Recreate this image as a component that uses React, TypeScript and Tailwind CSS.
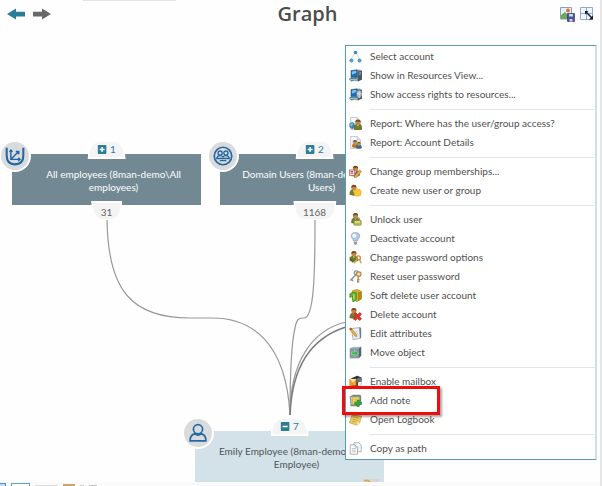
import { type ReactNode } from "react";

const Person = ({ x = 0, y = 0, coat = "#6f7d24" }: { x?: number; y?: number; coat?: string }) => (
  <g transform={`translate(${x} ${y})`}>
    <path d="M0 12 Q0 6.500 3 6 H7 Q10 6.500 10 12 Q5 14 0 12Z" fill={coat} stroke="#4b4a1c" strokeWidth="0.500" />
    <path d="M4 6 L5 9 L6 6Z" fill="#f3efdc" />
    <circle cx="5" cy="3.500" r="3.200" fill="#c08a4e" />
    <path d="M2 3.500 Q1.500 0 5 0 Q8.500 0 8 3.500 Q6 1.500 2 3.500Z" fill="#7a4a1e" />
  </g>
);

const Server = () => (
  <>
    <path d="M7 1.500 L13 0.500 L16 2 V13 L10 15.500 L7 14Z" fill="#8d9ba8" />
    <path d="M11 3 L16 2 V13 L11 15.500Z" fill="#4b5763" />
    <path d="M12 5 L15 4 M12 7 L15 6" stroke="#b8c4ce" strokeWidth="0.800" />
    <path d="M2.500 2 L10 1 V10 L2.500 10.500Z" fill="#1f6db5" stroke="#17405f" strokeWidth="0.700" />
    <path d="M3.500 3 L9 2.300 V5 L3.500 7Z" fill="#7fc0ee" />
    <path d="M1 11 L9 10.500 L11 13 L3 15.500 L0 13Z" fill="#3b8cc9" />
    <path d="M1 13 H10" stroke="#f1cf55" strokeWidth="1" />
  </>
);

const Page = () => (
  <>
    <path d="M2 0.500 H10 L14 4.500 V15.500 H2Z" fill="#f5f7f9" stroke="#a9b1b8" strokeWidth="0.800" />
    <path d="M10 0.500 V4.500 H14" fill="none" stroke="#a9b1b8" strokeWidth="0.800" />
  </>
);

const icons: Record<string, ReactNode> = {
  select: (
    <>
      <path d="M7 4 L3 11 M9 4 L13 11" stroke="#b4c3cd" strokeWidth="1" strokeDasharray="2 1" />
      <circle cx="8" cy="3" r="2.200" fill="#3a8cc4" />
      <circle cx="3" cy="13" r="2.400" fill="#4f9bd0" />
      <circle cx="13" cy="13" r="2.400" fill="#4f9bd0" />
    </>
  ),
  resources: <Server />,
  rights: (
    <>
      <Server />
      <path d="M9 4 L12.500 2.500 L16 4 V9 Q15 12 12.500 13 Q10 12 9 9Z" fill="#9fb3c3" stroke="#58687a" strokeWidth="0.800" />
      <path d="M12.500 4 V12 M10 7 H15" stroke="#e5edf2" strokeWidth="1" />
    </>
  ),
  access: (
    <>
      <Page />
      <path d="M0.500 8 L4 6 L7 8 V12 L4 15 L0.500 12Z" fill="#3c83b6" />
      <path d="M1.500 9 L4 7.500 L5 9 L3 12Z" fill="#8cc2e4" />
      <Person x={6} y={3} />
    </>
  ),
  details: (
    <>
      <Page />
      <rect x="4" y="5" width="7" height="5" fill="#c8d9e5" />
      <g transform="translate(4 5) scale(0.700)">
        <Person coat="#ba741d" />
      </g>
      <g transform="translate(9 7) scale(0.650)">
        <Person coat="#2865ad" />
      </g>
    </>
  ),
  membership: (
    <>
      <Person x={3} y={1} coat="#3d78b6" />
      <path d="M0.500 6 H7 V13 H0.500Z" fill="#f4e5e1" stroke="#b23b2e" strokeWidth="0.800" />
      <path d="M2 8 H5 M2 10 H5" stroke="#c5372c" strokeWidth="1.200" />
      <path d="M7 13 L13 6 L15.500 8 L9.500 15 L6.500 15.500Z" fill="#f0a832" stroke="#a25a18" strokeWidth="0.600" />
    </>
  ),
  create: (
    <>
      <Person x={1} y={1} />
      <circle cx="10.500" cy="10.500" r="4.800" fill="#efb01f" />
      <path d="M10.500 4.500 L12 8 L16 8.500 L13.500 11 L14.500 15 L10.500 13.500 L7 15 L8 11 L5.500 8.500 L9 8Z" fill="#f8c940" />
    </>
  ),
  unlock: (
    <>
      <Person x={3} y={0} />
      <path d="M8 9 V7 Q10.500 4 13 7 V9" fill="none" stroke="#9a9c8c" strokeWidth="1.300" />
      <rect x="6" y="9" width="9" height="6" rx="1" fill="#b8bf52" stroke="#73772b" strokeWidth="0.700" />
      <path d="M7.500 11 H13.500" stroke="#edf0a8" strokeWidth="1.300" />
    </>
  ),
  bulb: (
    <>
      <path d="M5.500 11 Q5 9 3.500 7.500 Q0.500 1 8 0.500 Q15.500 1 12.500 7.500 Q11 9 10.500 11Z" fill="#b6c8dc" stroke="#8195ae" strokeWidth="0.700" />
      <circle cx="6.500" cy="4.500" r="2.500" fill="#eff6fc" />
      <path d="M6 12 H10 V14.500 L8 16 L6 14.500Z" fill="#7e858d" />
      <path d="M6 13.500 H10" stroke="#d2d5d8" strokeWidth="0.700" />
    </>
  ),
  options: (
    <>
      <Person x={1} y={0} />
      <circle cx="11.500" cy="8.500" r="2.500" fill="none" stroke="#c9872f" strokeWidth="1.500" />
      <path d="M10 10.500 L6 15 M13 10.500 L15 15" stroke="#d4a142" strokeWidth="1.800" />
      <path d="M1 8 L5 14" stroke="#3d6b2e" strokeWidth="1.500" />
    </>
  ),
  keys: (
    <>
      <path d="M9.500 5 L1.500 13 M3 11.500 L5 13.500" stroke="#8d969e" strokeWidth="1.900" />
      <circle cx="9" cy="3.500" r="2.500" fill="#e2e7eb" stroke="#8d969e" strokeWidth="1.500" />
      <circle cx="12" cy="5" r="2.800" fill="#f3dfad" stroke="#b7893c" strokeWidth="1.500" />
      <path d="M11.500 8 L10.500 15.500 M11 12 H13 M10.500 14.500 H12.500" stroke="#b7893c" strokeWidth="1.700" />
    </>
  ),
  softDelete: (
    <>
      <path d="M4 2 L10 0.500 L15.500 3 V12 L10 15.500 L4 13Z" fill="#d9af2a" stroke="#8b6b15" strokeWidth="0.600" />
      <path d="M11 4 L15.500 3 V12 L11 15.500Z" fill="#b08a1b" />
      <path d="M1 6 Q4 3 9 4.500 V13 Q7 16 4.500 15.500 V9 L1 10.500Z" fill="#62b32e" stroke="#2d7a1c" strokeWidth="0.700" />
      <path d="M6 6.500 V13" stroke="#c5ee98" strokeWidth="1.300" />
    </>
  ),
  remove: (
    <>
      <Person x={1} y={0} />
      <path d="M5.500 7 L8 5.500 L10.500 8 L13.500 5.500 L15.500 7.500 L13 10.500 L15.500 13.500 L13 15.500 L10.500 13 L7.500 15.500 L5.500 13.500 L8 10.500Z" fill="#e53328" stroke="#9f1c15" strokeWidth="0.600" />
    </>
  ),
  edit: (
    <>
      <path d="M3 2 L14 0.500 V14 L5 15.500Z" fill="#e9eef3" stroke="#8393a5" strokeWidth="0.800" />
      <path d="M12.500 1 L15 1.500 V13 L13.500 14Z" fill="#6b7d96" />
      <path d="M7 6 L11 5.500 M7 8.500 H11 M7 11 H11" stroke="#b7c4d0" strokeWidth="0.800" />
      <path d="M0.500 2 L2.500 1 L9 9 L9.300 12 L7 10.800Z" fill="#eeb13e" stroke="#a86d1b" strokeWidth="0.600" />
      <path d="M0.500 2 L2.500 1 L4 3 L2 4.200Z" fill="#c84433" />
    </>
  ),
  move: (
    <>
      <path d="M1 3 L5 1 H15 V12 L12 15 H1Z" fill="#a9b8c4" />
      <path d="M1 3 H12 V15 H1Z" fill="#8497a8" />
      <path d="M12 3 L15 1 V12 L12 15Z" fill="#556473" />
      <path d="M3 7.500 H7 V5 L12 9 L7 13 V10.500 H3Z" fill="#41b649" stroke="#d8f1d5" strokeWidth="0.500" />
    </>
  ),
  mailbox: (
    <>
      <path d="M3 4 L10 1 L15.500 3 V12 L9 15 L3 13Z" fill="#2d3135" />
      <path d="M10 4 L15 3 V8 L10 9Z" fill="#70777c" />
      <path d="M1 5 H9 V13 H1Z" fill="#f2a02b" stroke="#b45e13" strokeWidth="0.600" />
      <path d="M1 5 L5 9.500 L9 5Z" fill="#fde2a5" />
      <path d="M11 9 L15.500 8 V12 L11 14Z" fill="#eef1f2" />
    </>
  ),
  addNote: (
    <>
      <path d="M1 3 L5 1 H14 L15 3 V12 L12 15 H2Z" fill="#77838c" />
      <path d="M2 3.500 H13 V13 H3Z" fill="#c3ccd2" />
      <path d="M4 4 L12 3.500 L12.500 9.500 L9 13 H4.500Z" fill="#f0d75d" stroke="#a68e27" strokeWidth="0.500" />
      <path d="M6 6.500 H10 M6 9 H8" stroke="#c1a431" strokeWidth="0.800" />
      <path d="M10 7.500 H12.500 V10 H15.500 V12.800 H12.500 V15.500 H10 V12.800 H7 V10 H10Z" fill="#2fae34" stroke="#12711d" strokeWidth="0.600" />
    </>
  ),
  logbook: (
    <>
      <path d="M4 2 L15.500 4 L13 12 L10 15 L0.500 12Z" fill="#e9cc62" stroke="#a78a2b" strokeWidth="0.700" />
      <path d="M10 15 L10.500 11.500 L13 12Z" fill="#fff1b0" />
      <path d="M5.500 5 L12 6.300 M4.500 7.500 L11 9 M4 10 L8 11" stroke="#a98d36" strokeWidth="0.800" />
      <circle cx="8" cy="2" r="1.500" fill="#9b9b84" />
    </>
  ),
  copy: (
    <>
      <path d="M6 0.800 H12 L15 4 V12 H6Z" fill="#f2f4f5" stroke="#9ba3aa" strokeWidth="0.900" />
      <path d="M1.500 3.500 H7.500 L10.500 6.500 V15 H1.500Z" fill="#fafbfb" stroke="#8f989f" strokeWidth="0.900" />
      <path d="M7.500 3.500 V6.500 H10.500 M3.500 8 H8.500 M3.500 10 H8.500 M3.500 12 H8.500" fill="none" stroke="#a7afb5" strokeWidth="0.800" />
    </>
  ),
};

type MenuEntry = { label: string; icon: string; marked?: boolean };

const menuGroups: MenuEntry[][] = [
  [
    { label: "Select account", icon: "select" },
    { label: "Show in Resources View...", icon: "resources" },
    { label: "Show access rights to resources...", icon: "rights" },
  ],
  [
    { label: "Report: Where has the user/group access?", icon: "access" },
    { label: "Report: Account Details", icon: "details" },
  ],
  [
    { label: "Change group memberships...", icon: "membership" },
    { label: "Create new user or group", icon: "create" },
  ],
  [
    { label: "Unlock user", icon: "unlock" },
    { label: "Deactivate account", icon: "bulb" },
    { label: "Change password options", icon: "options" },
    { label: "Reset user password", icon: "keys" },
    { label: "Soft delete user account", icon: "softDelete" },
    { label: "Delete account", icon: "remove" },
    { label: "Edit attributes", icon: "edit" },
    { label: "Move object", icon: "move" },
  ],
  [
    { label: "Enable mailbox", icon: "mailbox" },
    { label: "Add note", icon: "addNote", marked: true },
    { label: "Open Logbook", icon: "logbook" },
  ],
  [{ label: "Copy as path", icon: "copy" }],
];

function ContextMenu() {
  return (
    <div
      role="menu"
      className="absolute left-[345px] top-[9px] w-[252px] border border-r-2 border-[#5b9ab0] border-r-[#cfdfe7] bg-white pb-px pt-px"
    >
      {menuGroups.map((group, i) => (
        <div key={i} role="group">
          {i > 0 && (
            <div className="flex h-[10px] items-center pl-6">
              <div className="h-px w-full bg-[#e2e4e6]" />
            </div>
          )}
          {group.map((item) => (
            <button
              key={item.label}
              type="button"
              role="menuitem"
              className="relative flex h-[19px] w-full items-center gap-2 pl-[3px] text-left text-[10px] leading-[19px] whitespace-nowrap text-[#505050]"
            >
              <svg viewBox="0 0 16 16" className="size-[13px] shrink-0" aria-hidden="true">
                {icons[item.icon]}
              </svg>
              {item.label}
              {item.marked && (
                <span className="absolute -inset-y-[5px] -left-1 z-10 w-[98px] border-3 border-[#f20d0d] shadow-[2px_2px_2px_rgba(0,0,0,0.350)]" />
              )}
            </button>
          ))}
        </div>
      ))}
    </div>
  );
}

function Toggle({ open, count }: { open?: boolean; count: number }) {
  return (
    <button
      type="button"
      className="absolute -top-3 left-1/2 flex h-[17px] -translate-x-1/2 items-center gap-1 rounded-t-xl border-2 border-t-0 border-white bg-[#f4f4f4] px-2 text-[10px] leading-[15px] text-[#2c7d96]"
    >
      <svg viewBox="0 0 9 9" className="size-[9px]" aria-hidden="true">
        <rect width="9" height="9" rx="1" fill="#2c7d96" />
        <path d={open ? "M2 4.500H7" : "M2 4.500H7M4.500 2V7"} stroke="#fff" strokeWidth="1.400" />
      </svg>
      {count}
    </button>
  );
}

function Badge({ children }: { children: ReactNode }) {
  return (
    <div className="absolute -left-[11px] -top-3 flex size-7 items-center justify-center rounded-full bg-[#dadbdc] shadow-[0_0_0_2px_#fff]">
      <svg viewBox="0 0 24 24" className="size-5" fill="none" stroke="#2467a5" strokeWidth="2" aria-hidden="true">
        {children}
      </svg>
    </div>
  );
}

function GraphNode({
  position,
  lines,
  badge,
  parents,
  members,
}: {
  position: string;
  lines: string[];
  badge: ReactNode;
  parents: number;
  members?: number;
}) {
  const isGroup = members !== undefined;
  return (
    <div
      className={`absolute w-[189px] pl-[14px] pt-[14px] text-center text-[10px] leading-[13px] ${position} ${
        isGroup ? "h-[51px] bg-[#728994] text-white" : "h-[70px] bg-[#d3e1e8] text-[#4f5559]"
      }`}
    >
      {lines.map((line) => (
        <p key={line} className="whitespace-nowrap">
          {line}
        </p>
      ))}
      <Badge>{badge}</Badge>
      <Toggle open={!isGroup} count={parents} />
      {isGroup && (
        <span className="absolute left-1/2 top-[47px] h-[18px] -translate-x-1/2 rounded-b-xl border-2 border-b-0 border-white bg-[#f4f4f4] px-2 text-[10px] leading-[18px] text-[#666]">
          {members}
        </span>
      )}
      {!isGroup && (
        <svg viewBox="0 0 16 8" className="absolute right-[5px] top-12 h-2 w-4" aria-hidden="true">
          <rect width="16" height="8" fill="#d8d5d0" />
          <path d="M1 1.500H5L7 3" stroke="#e3a341" strokeWidth="1.500" fill="none" />
        </svg>
      )}
    </div>
  );
}

export default function App() {
  return (
    <div className="flex h-screen flex-col overflow-hidden border-r-2 border-[#e6e6e6] bg-[#fefefe] font-[Lato,'Open_Sans',sans-serif]">
      <header className="relative grid h-9 shrink-0 grid-cols-[1fr_auto_1fr] items-center pl-[7px] pr-[6px] pb-2">
        <div className="absolute left-[83px] top-0 h-px w-[93px] bg-[#e3e3e3]" />
        <nav className="flex gap-2">
          <button type="button" aria-label="Back" className="text-[#2a7d98]">
            <svg viewBox="0 0 18 12" className="h-3 w-[18px]" fill="currentColor">
              <path d="M0 6 L9 0.500 V3.700 H18 V8.500 H9 V11.500Z" />
            </svg>
          </button>
          <button type="button" aria-label="Forward" className="text-[#686868]">
            <svg viewBox="0 0 18 12" className="h-3 w-[18px]" fill="currentColor">
              <path d="M18 6 L9 0.500 V3.700 H0 V8.500 H9 V11.500Z" />
            </svg>
          </button>
        </nav>
        <h1 className="pl-[14px] font-['Open_Sans',sans-serif] text-[20px] leading-7 font-semibold text-[#4c4c4c]">
          Graph
        </h1>
        <div className="flex items-center justify-end gap-[5px]">
          <button type="button" aria-label="Save image">
            <svg viewBox="0 0 15 15" className="size-[15px]">
              <path d="M0.500 0.500 H11.500 V12 H0.500Z" fill="#e6f1fb" stroke="#8fa0b5" />
              <path d="M1 12 V8 L5 5 L8 8 L11 6.500 V12Z" fill="#6cab58" />
              <circle cx="8" cy="3.500" r="2" fill="#e2703f" />
              <path d="M7.500 6.500 H14.500 V14.500 H7.500Z" fill="#4a5795" stroke="#303b74" strokeWidth="0.700" />
              <path d="M9 7 H13 V9.500 H9Z M9.500 12 H12.500 V14.500 H9.500Z" fill="#cdd4ec" />
            </svg>
          </button>
          <button type="button" aria-label="Fit to window">
            <svg viewBox="0 0 14 14" className="size-[14px]">
              <path d="M0.500 0.500 H12.500 V12.500 H0.500Z M6.500 0.500 V12.500 M0.500 6.500 H12.500" fill="#f3f7ff" stroke="#8fa9dc" />
              <path d="M6 5 L12 11" stroke="#14182e" strokeWidth="1.400" />
              <path d="M5 4 H8.500 L5 7.500Z M13 12.500 H9 L13 8.500Z" fill="#14182e" />
            </svg>
          </button>
        </div>
      </header>

      <main className="relative min-h-0 flex-1 overflow-hidden">
        <svg
          viewBox="0 36 600 446"
          className="absolute left-0 top-0 h-[446px] w-[600px]"
          fill="none"
          stroke="#999"
          strokeWidth="1.200"
          aria-hidden="true"
        >
          <path d="M107 220 C108 292 133 318 190 318 H212 C250 318 286 340 290 415" />
          <path d="M315 220 C315 275 314 318 304 318 C299 318 297 318 295 328 C291 345 290 380 290 415" />
          <path d="M346 322 C312 330 290 362 290 415" />
          <path d="M346 327 C314 337 292 364 290 415" stroke="#7c7c7c" strokeWidth="1.500" />
        </svg>

        <GraphNode
          position="left-3 top-[118px]"
          lines={["All employees (8man-demo\\All", "employees)"]}
          parents={1}
          members={31}
          badge={
            <>
              <path d="M2 2 V11 Q2 22 12 22 Q22 22 22 11 V2" strokeWidth="2.500" />
              <path d="M7 5 V16 H18 M8 15 L16 7 M5.500 7 L7 5 L9 7 M13 6.500 H16.500 V10 M16 14 L18 16 L16 18" strokeWidth="1.700" />
            </>
          }
        />
        <GraphNode
          position="left-[220px] top-[118px]"
          lines={["Domain Users (8man-demo\\Domain", "Users)"]}
          parents={2}
          members={1168}
          badge={
            <>
              <circle cx="12" cy="12" r="10.500" strokeWidth="2" />
              <circle cx="8.500" cy="8.500" r="2.500" strokeWidth="1.600" />
              <circle cx="15.500" cy="8.500" r="2.500" strokeWidth="1.600" />
              <path d="M4.500 15 Q5 11.500 8.500 11.500 Q11 11.500 12 13 Q13 11.500 15.500 11.500 Q19 11.500 19.500 15Z M8 17.500 H16" strokeWidth="1.600" />
            </>
          }
        />
        <GraphNode
          position="left-[195px] top-[395px]"
          lines={["Emily Employee (8man-demo\\Emily", "Employee)"]}
          parents={7}
          badge={
            <>
              <circle cx="12" cy="7.500" r="5.500" />
              <path d="M8 13 Q2.500 14 2.500 21.500 H21.500 Q21.500 14 16 13 Q12 16 8 13Z" />
            </>
          }
        />
        <ContextMenu />
      </main>

      <footer className="flex h-1 shrink-0 items-end gap-[5px] overflow-hidden bg-[#fafafa]">
        <div className="h-[3px] w-1.5 border-r border-t border-[#4d97d0] bg-[#bcdcf3]" />
        <div className="h-[3px] w-[19px] border border-b-0 border-[#5aa1d8] bg-white" />
        <div className="h-px w-[23px] bg-[#dedede]" />
        <div className="h-0.5 w-3 bg-[#d3a06b]" />
        <div className="h-px w-1 bg-[#cfcfcf]" />
        <div className="h-px w-2 bg-[#c4c4c4]" />
      </footer>
    </div>
  );
}
